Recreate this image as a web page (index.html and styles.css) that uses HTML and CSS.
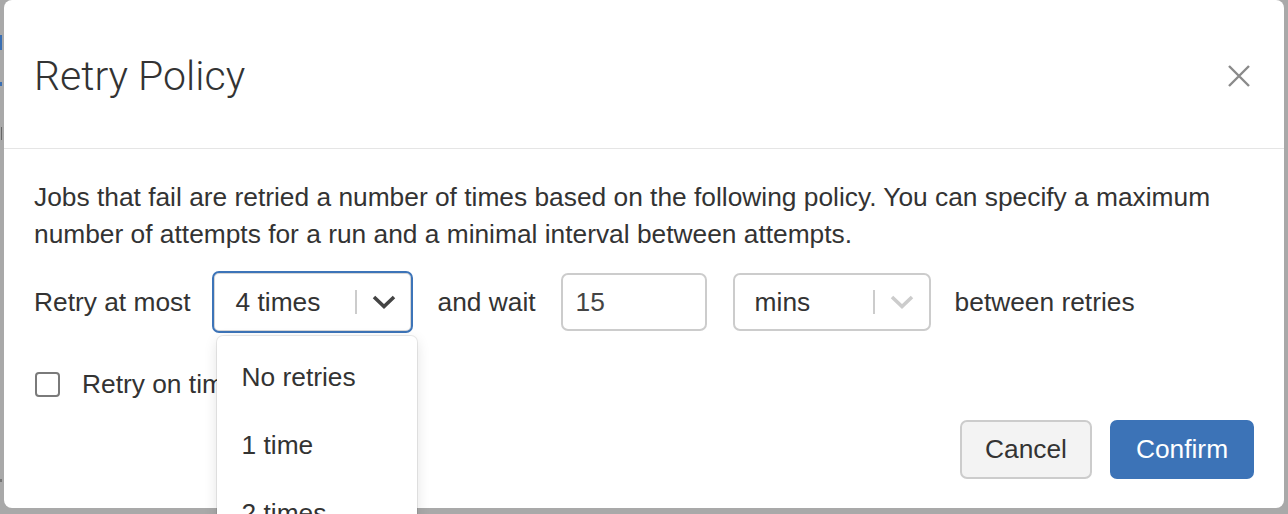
FILE: index.html
```html
<!DOCTYPE html>
<html lang="en">
<head>
<meta charset="utf-8">
<title>Retry Policy</title>
<link rel="stylesheet" href="styles.css">
</head>
<body>
<div class="backdrop-bits">
  <span class="bit bit-a"></span>
  <span class="bit bit-b"></span>
  <span class="bit bit-c"></span>
  <span class="bit bit-d"></span>
</div>
<div class="modal">
  <div class="modal-header">
    <h4 class="modal-title">Retry Policy</h4>
    <button class="close" aria-label="Close">
      <svg width="22" height="22" viewBox="0 0 22 22"><path d="M1 1 L21 21 M21 1 L1 21" stroke="#8a8a8a" stroke-width="2.4" fill="none"/></svg>
    </button>
  </div>
  <div class="modal-body">
    <p class="intro">Jobs that fail are retried a number of times based on the following policy. You can specify a maximum number of attempts for a run and a minimal interval between attempts.</p>
    <div class="policy-row">
      <span class="label">Retry at most</span>
      <div class="select select-focused select-times">
        <span class="select-value">4 times</span>
        <span class="select-sep"></span>
        <span class="select-ind">
          <svg width="24" height="14" viewBox="0 0 24 14"><path d="M2 2 L12 11.5 L22 2" stroke="#444" stroke-width="3.6" fill="none" stroke-linejoin="miter"/></svg>
        </span>
        <div class="menu">
          <div class="menu-item">No retries</div>
          <div class="menu-item">1 time</div>
          <div class="menu-item">2 times</div>
          <div class="menu-item">3 times</div>
        </div>
      </div>
      <span class="label label-wait">and wait</span>
      <input class="text-input" type="text" value="15">
      <div class="select select-units">
        <span class="select-value">mins</span>
        <span class="select-sep"></span>
        <span class="select-ind">
          <svg width="24" height="14" viewBox="0 0 24 14"><path d="M2 2 L12 11.5 L22 2" stroke="#cccccc" stroke-width="3.6" fill="none"/></svg>
        </span>
      </div>
      <span class="label label-between">between retries</span>
    </div>
    <label class="check-row">
      <span class="checkbox"></span>
      <span class="check-label">Retry on timeout</span>
    </label>
  </div>
  <div class="modal-footer">
    <button class="btn btn-default">Cancel</button>
    <button class="btn btn-primary">Confirm</button>
  </div>
</div>
</body>
</html>
```

FILE: styles.css
```css
html, body {
  margin: 0;
  padding: 0;
}
body {
  background: #a9a9a9;
  width: 1288px;
  height: 514px;
  overflow: hidden;
  font-family: "Liberation Sans", Arial, Helvetica, sans-serif;
  color: #333;
  position: relative;
}
.backdrop-bits .bit {
  position: absolute;
  left: 0;
  width: 2px;
}
.bit-a { top: 35px; height: 15px; background: #3a6fb3; }
.bit-b { top: 82px; height: 4px; background: #3a6fb3; }
.bit-c { top: 127px; height: 13px; width: 1px !important; left: 1px !important; background: #666; }
.bit-d { top: 479px; height: 3px; background: #777; }

.modal {
  position: relative;
  margin-left: 4px;
  width: 1280px;
  height: 508px;
  background: #fff;
  border-radius: 8px;
  box-sizing: border-box;
}
.modal-header {
  height: 149px;
  box-sizing: border-box;
  border-bottom: 1px solid #e5e5e5;
  padding: 0 34px 0 30px;
  display: flex;
  align-items: center;
  justify-content: space-between;
}
.modal-title {
  margin: 0;
  font-family: Roboto, "Liberation Sans", sans-serif;
  font-weight: 300;
  font-size: 41px;
  line-height: 44px;
  color: #333;
  padding-top: 4px;
}
.close {
  border: 0;
  background: transparent;
  padding: 0;
  width: 22px;
  height: 22px;
  display: flex;
  margin-top: 4px;
}
.modal-body {
  padding: 30px 30px 0;
  font-size: 26.34px;
  line-height: 37px;
}
.intro {
  margin: 0 0 20px;
}
.policy-row {
  height: 58px;
  display: flex;
  align-items: center;
}
.label {
  white-space: nowrap;
}
.select {
  position: relative;
  box-sizing: border-box;
  height: 58px;
  border: 2px solid #cccccc;
  border-radius: 7px;
  display: flex;
  align-items: center;
  background: #fff;
}
.select-focused {
  height: 62px;
  border-color: #3d74b8;
  box-shadow: inset 0 0 0 1px #d6d6d6;
}
.select-times {
  width: 201px;
  margin-left: 21px;
}
.label-wait {
  margin-left: 25px;
}
.select-units {
  width: 198px;
  margin-left: 26px;
}
.label-between {
  margin-left: 24px;
}
.select-value {
  flex: 1;
  padding-left: 20px;
  color: #333;
}
.select-times .select-value { padding-left: 22px; }
.select-sep {
  width: 2px;
  height: 24px;
  background: #cccccc;
}
.select-ind {
  width: 54px;
  display: flex;
  justify-content: center;
  align-items: center;
}
.text-input {
  box-sizing: border-box;
  width: 146px;
  height: 58px;
  border: 2px solid #cccccc;
  border-radius: 7px;
  padding: 0 13px;
  font: inherit;
  font-size: 26.34px;
  color: #444;
  outline: none;
  margin-left: 25px;
}
.menu {
  position: absolute;
  top: 63px;
  left: 3px;
  width: 200px;
  background: #fff;
  border-radius: 6px;
  box-shadow: 0 0 0 1px rgba(0, 0, 0, 0.08), 0 4px 14px rgba(0, 0, 0, 0.12);
  padding-top: 7px;
  z-index: 10;
}
.menu-item {
  height: 68px;
  line-height: 68px;
  padding-left: 25px;
  color: #333;
  white-space: nowrap;
}
.check-row {
  margin-top: 35px;
  display: flex;
  align-items: center;
  height: 37px;
}
.checkbox {
  box-sizing: border-box;
  width: 25px;
  height: 25px;
  border: 2px solid #7a7a7a;
  border-radius: 4px;
  margin-left: 1px;
}
.check-label {
  margin-left: 22px;
}
.modal-footer {
  display: flex;
  justify-content: flex-end;
  gap: 18px;
  padding: 17px 30px 0;
}
.btn {
  box-sizing: border-box;
  height: 59px;
  padding: 0 20px;
  border-radius: 7px;
  font-family: "Liberation Sans", Arial, sans-serif;
  font-size: 26.34px;
  border: 2px solid transparent;
}
.btn-default {
  background: #f3f3f3;
  border-color: #cccccc;
  color: #333;
  width: 132px;
}
.btn-primary {
  background: #3c73b7;
  border-color: #3c73b7;
  color: #fff;
  width: 144px;
}
```
